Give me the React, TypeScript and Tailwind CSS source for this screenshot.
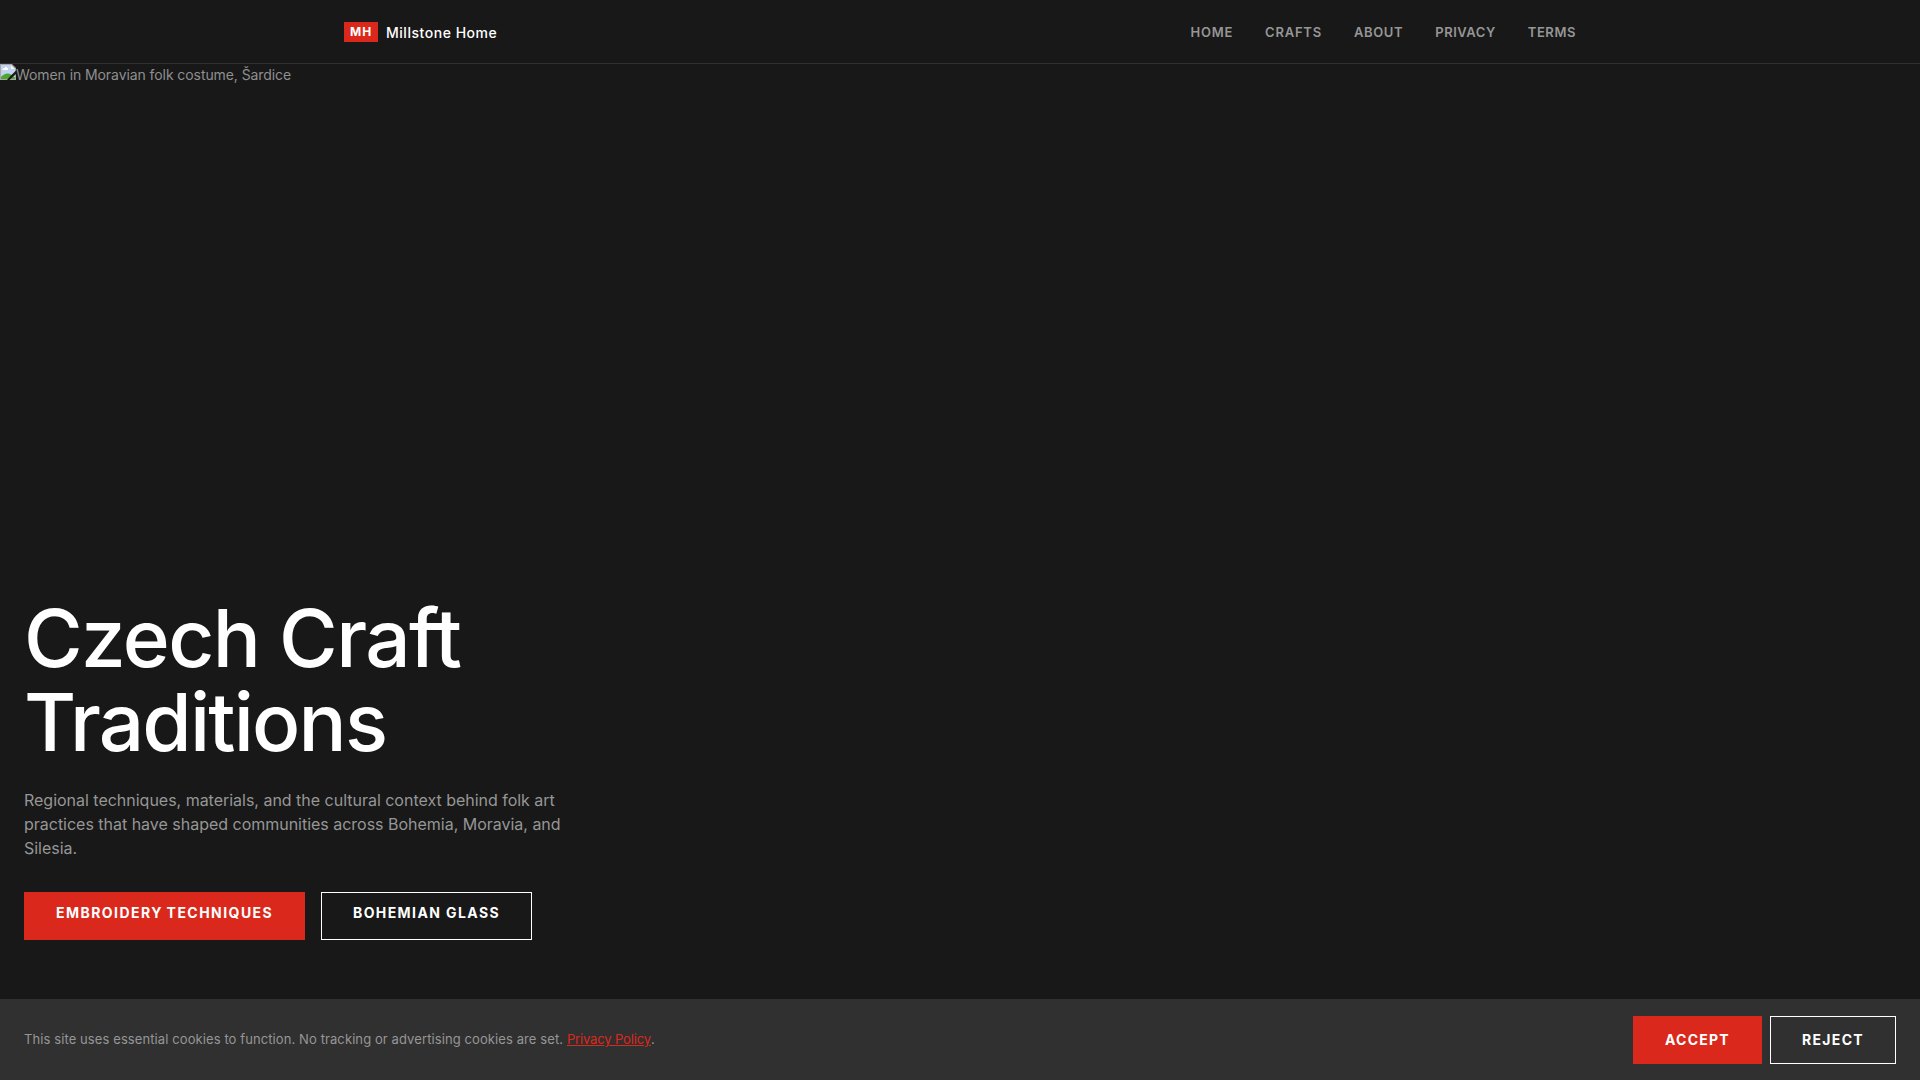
import React from "react";

interface NavLink {
  label: string;
  href: string;
  tracking: string;
}

const navLinks: NavLink[] = [
  { label: "Home", href: "#home", tracking: "tracking-[0.76px]" },
  { label: "Crafts", href: "#crafts", tracking: "tracking-[0.78px]" },
  { label: "About", href: "#about", tracking: "tracking-[0.62px]" },
  { label: "Privacy", href: "#privacy", tracking: "tracking-[0.54px]" },
  { label: "Terms", href: "#terms", tracking: "tracking-[0.57px]" },
];

const MissingImageIcon: React.FC = () => (
  <svg className="w-4 h-4 shrink-0" viewBox="0 0 16 16">
    <path fill="#a7a7a7" d="M0 0h12l4 4v12H0z" />
    <path fill="#c2d3f2" d="M1 1h10v4h4v11H1z" />
    <path fill="#fff" d="M2.5 6V5h1V4H5V3h2v1h1v2z" />
    <path fill="#f4f4f4" d="M11 1l4 4h-4z" />
    <path fill="#4fa52f" d="M1 15v-2c2-2 4-3.5 6.500-3.500S12 11 15 13.500V15z" />
    <path fill="#a7a7a7" d="M0 15h16v1H0z" />
    {/* tear across the lower right corner */}
    <path fill="#181818" d="M16 6.500V10l-6.500 6H7l3-3.500z" />
  </svg>
);

const Header: React.FC = () => (
  <header className="h-16 border-b border-[#303030] bg-[#181818]">
    <div className="flex items-center justify-between h-full px-6 mx-auto max-w-7xl">
      <a href="#home" className="flex items-center gap-2">
        <span className="w-[34px] h-5 pl-1.5 bg-[#da291c] text-xs leading-5 font-bold tracking-[1px] text-white">
          MH
        </span>
        <span className="pt-0.5 text-sm font-medium tracking-[0.53px] text-white">
          Millstone Home
        </span>
      </a>
      <nav className="flex gap-8">
        {navLinks.map((link) => (
          <a
            key={link.label}
            href={link.href}
            className={`text-[13px] leading-5 font-semibold text-[#969696] uppercase ${link.tracking}`}
          >
            {link.label}
          </a>
        ))}
      </nav>
    </div>
  </header>
);

const Hero: React.FC = () => (
  <section className="flex flex-col justify-between h-[940px] pb-16">
    <div className="flex items-start text-sm leading-[21px] tracking-[-0.08px] text-[#8f8f8f]">
      <MissingImageIcon />
      <span>Women in Moravian folk costume, Šardice</span>
    </div>
    <div className="px-6">
      <h1 className="text-[80px] leading-[84px] font-medium tracking-[-1.6px] text-white">
        Czech Craft
        <br />
        <span className="tracking-[-1.8px]">Traditions</span>
      </h1>
      <p className="mt-6 max-w-[560px] text-base leading-6 tracking-[-0.015px] text-[#969696]">
        Regional techniques, materials, and the cultural context behind folk art
        practices that have shaped communities across Bohemia, Moravia, and
        Silesia.
      </p>
      <div className="flex gap-4 mt-8">
        <a
          href="#embroidery"
          className="h-12 w-[281px] px-8 pt-2.5 bg-[#da291c] text-sm leading-[21px] font-bold tracking-[1.45px] [word-spacing:-1px] whitespace-nowrap text-white uppercase"
        >
          Embroidery Techniques
        </a>
        <a
          href="#glass"
          className="h-12 px-[31px] pt-[9px] border border-white text-sm leading-[21px] font-bold tracking-[1.4px] text-white uppercase"
        >
          Bohemian Glass
        </a>
      </div>
    </div>
  </section>
);

const CookieBanner: React.FC = () => (
  <div className="fixed inset-x-0 bottom-0 flex items-center justify-between px-6 py-4 border-t border-[#303030] bg-[#303030]">
    <p className="pb-0.5 text-[13px] leading-5 tracking-[0.096px] text-[#969696]">
      This site uses essential cookies to function. No tracking or advertising
      cookies are set.{" "}
      <a
        href="#privacy"
        className="tracking-[-0.14px] text-[#da291c] underline"
      >
        Privacy Policy
      </a>
      .
    </p>
    <div className="flex gap-2">
      <button className="h-12 px-8 bg-[#da291c] text-sm font-bold tracking-[1.26px] text-white uppercase">
        Accept
      </button>
      <button className="h-12 px-[31px] border border-white text-sm font-bold tracking-[1.32px] text-white uppercase">
        Reject
      </button>
    </div>
  </div>
);

const App: React.FC = () => {
  return (
    <div className="h-screen overflow-hidden bg-[#181818] font-['Inter',sans-serif]">
      <Header />
      <Hero />
      <CookieBanner />
    </div>
  );
};

export default App;
